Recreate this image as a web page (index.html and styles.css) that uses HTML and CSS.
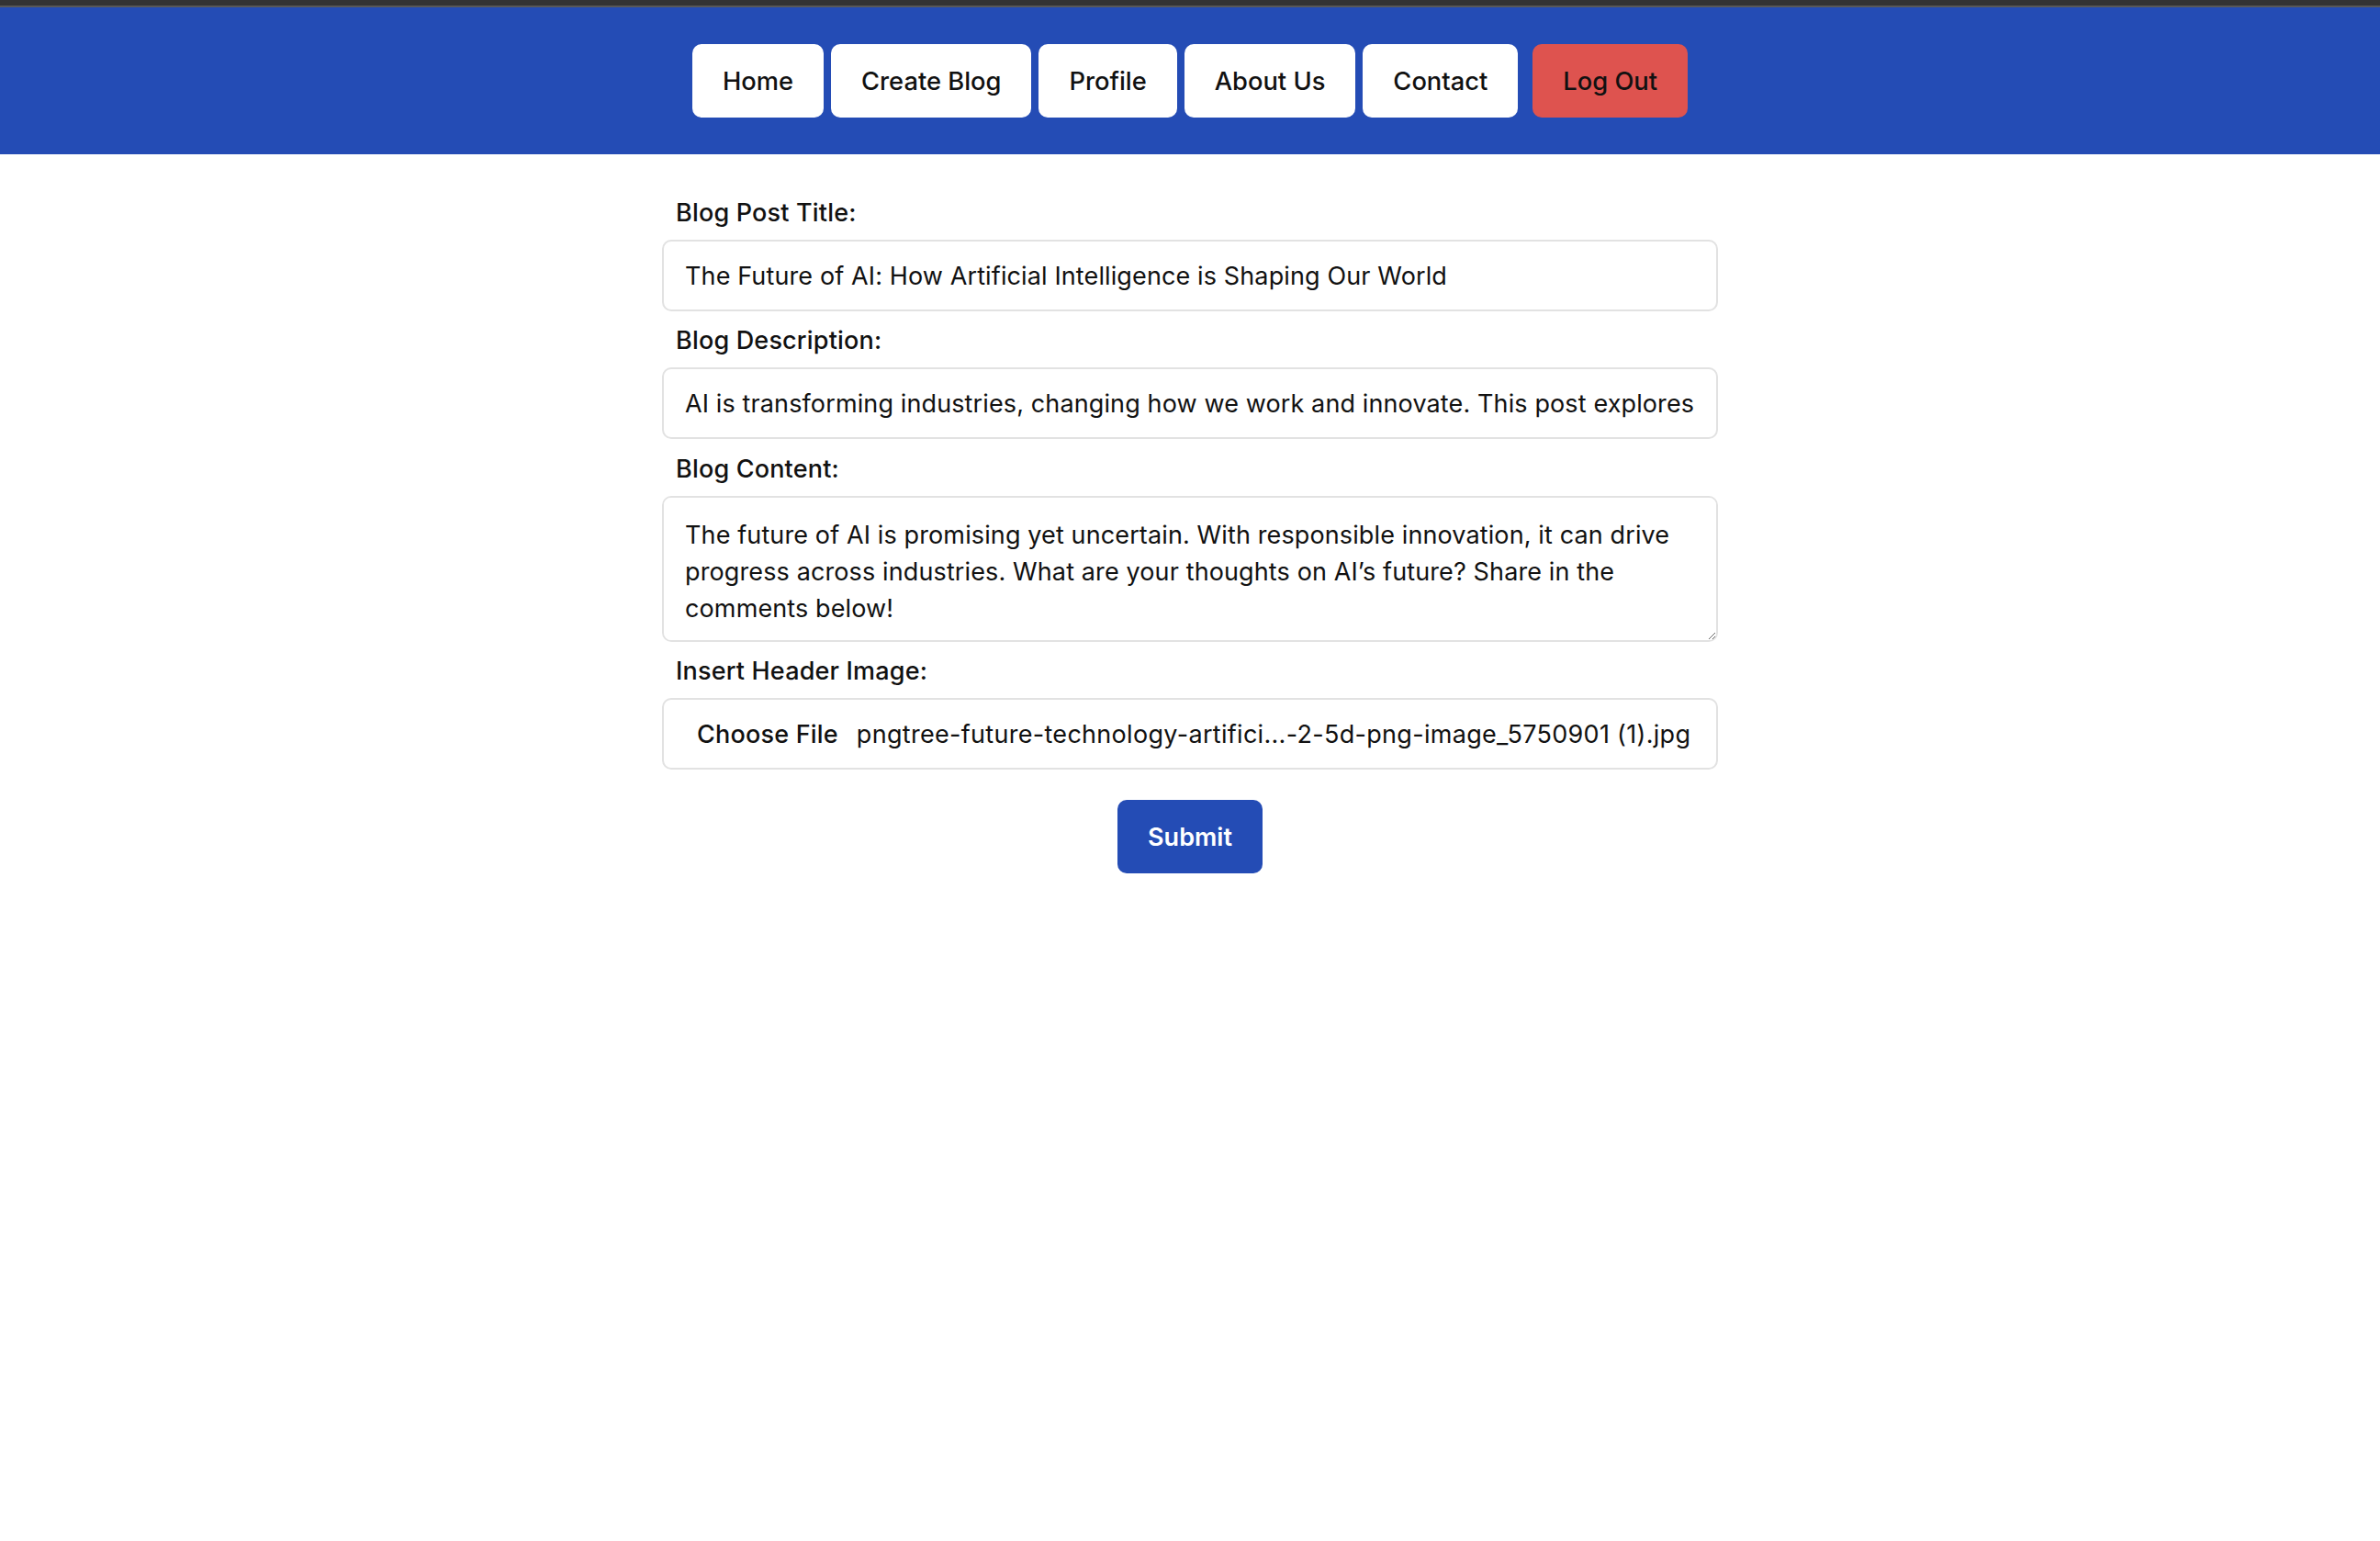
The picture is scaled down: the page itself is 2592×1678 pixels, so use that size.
FILE: index.html
```html
<!DOCTYPE html>
<html lang="en">
<head>
<meta charset="utf-8">
<title>Create Blog</title>
<link rel="stylesheet" href="styles.css">
</head>
<body>
<div class="topstrip"></div>
<nav class="navbar">
  <a class="nav-btn" href="#">Home</a>
  <a class="nav-btn" href="#">Create Blog</a>
  <a class="nav-btn" href="#">Profile</a>
  <a class="nav-btn" href="#">About Us</a>
  <a class="nav-btn" href="#">Contact</a>
  <a class="nav-btn logout" href="#">Log Out</a>
</nav>
<main class="page">
  <form class="blog-form">
    <label class="field-label" for="title">Blog Post Title:</label>
    <input class="field" id="title" type="text" value="The Future of AI: How Artificial Intelligence is Shaping Our World">
    <label class="field-label" for="desc">Blog Description:</label>
    <input class="field" id="desc" type="text" value="AI is transforming industries, changing how we work and innovate. This post explores the key trends, opportunities and challenges ahead.">
    <label class="field-label content-label" for="content">Blog Content:</label>
    <textarea class="field area" id="content" rows="3">The future of AI is promising yet uncertain. With responsible innovation, it can drive progress across industries. What are your thoughts on AI’s future? Share in the comments below!</textarea>
    <label class="field-label" for="img">Insert Header Image:</label>
    <div class="field file-field" id="img">
      <span class="file-btn">Choose File</span>
      <span class="file-name">pngtree-future-technology-artifici...-2-5d-png-image_5750901 (1).jpg</span>
    </div>
    <div class="actions">
      <button class="submit" type="button">Submit</button>
    </div>
  </form>
</main>
</body>
</html>
```
FILE: styles.css
```css
* { box-sizing: border-box; }

html, body {
  margin: 0;
  padding: 0;
  background: #ffffff;
  font-family: "Inter", "Noto Sans", "Liberation Sans", sans-serif;
  color: #111111;
}

.topstrip {
  height: 8px;
  background: #333333;
  border-bottom: 2px solid #585858;
}

.navbar {
  background: #244cb5;
  height: 160px;
  display: flex;
  justify-content: center;
  align-items: center;
  gap: 8px;
}

.nav-btn {
  display: flex;
  align-items: center;
  height: 80px;
  padding: 0 33px;
  background: #ffffff;
  color: #111111;
  border-radius: 10px;
  font-size: 27.3px;
  font-weight: 500;
  text-decoration: none;
}

.nav-btn.logout {
  background: #de534f;
  margin-left: 8px;
}

.page {
  display: flex;
  justify-content: center;
  padding-top: 32px;
}

.blog-form {
  width: 1150px;
  display: flex;
  flex-direction: column;
}

.field-label {
  display: block;
  margin: 12px 0 10px 15px;
  font-size: 27px;
  line-height: 39px;
  font-weight: 500;
  letter-spacing: 0.18px;
  color: #111111;
}

.content-label {
  margin-top: 13px;
}

.field {
  display: block;
  width: 100%;
  height: 78px;
  padding: 18px 23px;
  border: 2px solid #e2e2e2;
  border-radius: 10px;
  background: #ffffff;
  font-family: "Inter", "Noto Sans", "Liberation Sans", sans-serif;
  font-size: 27px;
  line-height: 39px;
  letter-spacing: 0.12px;
  color: #111111;
  outline: none;
}

.area {
  height: 159px;
  padding-top: 21px;
  line-height: 40px;
  resize: vertical;
}

.file-field {
  display: flex;
  align-items: center;
  gap: 20px;
  padding-left: 36px;
  white-space: nowrap;
  overflow: hidden;
  letter-spacing: 0.3px;
}

.file-btn {
  font-weight: 500;
  letter-spacing: 0.2px;
}

.actions {
  display: flex;
  justify-content: center;
  margin-top: 33px;
}

.submit {
  width: 158px;
  height: 80px;
  border: none;
  border-radius: 10px;
  background: #244cb5;
  color: #ffffff;
  font-family: "Inter", "Noto Sans", "Liberation Sans", sans-serif;
  font-size: 27px;
  font-weight: 600;
  cursor: pointer;
}
```
